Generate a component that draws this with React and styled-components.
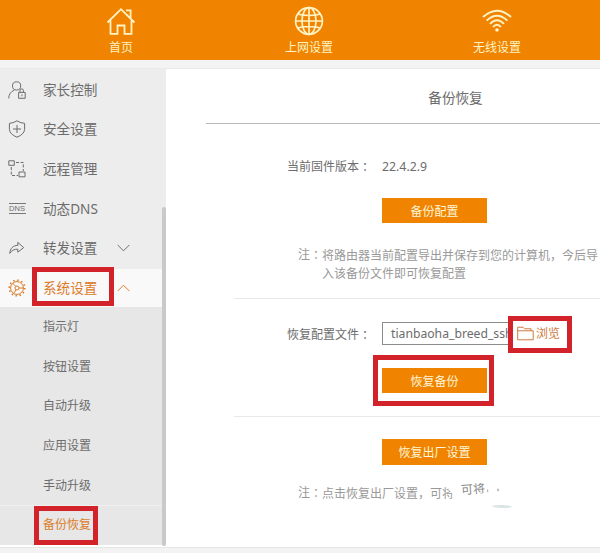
import React, { useState } from "react";
import styled, { createGlobalStyle, css } from "styled-components";

const HomeIcon = () => (
  <svg width="30" height="28" viewBox="0 0 30 28">
    <path
      d="M1.5 15.5 15 2.2 28.5 15.5M4.5 13.5V26.8H11.5V18.5H18.5V26.8H25.5V13.5M20 3.4H24.6V11"
      fill="none"
      stroke="currentColor"
      strokeWidth="1.8"
    />
  </svg>
);

const GlobeIcon = () => (
  <svg width="30" height="30" viewBox="0 0 30 30">
    <g fill="none" stroke="currentColor" strokeWidth="1.7">
      <circle cx="15" cy="15" r="13.4" />
      <ellipse cx="15" cy="15" rx="7" ry="13.4" />
      <path d="M15 1.6V28.4M1.6 15H28.4M4 8.2Q15 10.8 26 8.2M4 21.8Q15 19.2 26 21.8" />
    </g>
  </svg>
);

const WifiIcon = () => (
  <svg width="30" height="24" viewBox="0 0 30 24">
    <g fill="none" stroke="currentColor" strokeWidth="1.9">
      <path d="M1 8Q15-4.6 29 8M4.6 11.6Q15 1.8 25.4 11.6M8 14.8Q15 7.8 22 14.8M11 18Q15 13.4 19 18" />
    </g>
    <circle cx="15" cy="21" r="1.8" fill="currentColor" />
  </svg>
);

const ParentIcon = () => (
  <svg width="18" height="18" viewBox="0 0 18 18">
    <g fill="none" stroke="currentColor">
      <circle cx="8.6" cy="4.9" r="4.1" />
      <path d="M.7 17.4C.7 13.4 3 10.4 6.2 9.2M10.6 11.4V17.3H17.2V11.4ZM12 11.2V9.4Q12 7.9 13.7 7.9T15.4 9.4V11.2M13.9 13.4V15.3" />
    </g>
  </svg>
);

const ShieldIcon = () => (
  <svg width="18" height="18" viewBox="0 0 18 18">
    <path
      d="M9 .8Q5 3.3 1.4 3.3V9.5Q1.8 14.3 9 17.2Q16.2 14.3 16.6 9.5V3.3Q13 3.3 9 .8ZM9 5V13M5 9H13"
      fill="none"
      stroke="currentColor"
    />
  </svg>
);

const RemoteIcon = () => (
  <svg width="18" height="18" viewBox="0 0 18 18">
    <g fill="none" stroke="currentColor">
      <path d="M.8.8H6.3V5.3H.8ZM11 12H17V16.8H11Z" />
      <path d="M8 2.5H15.3V11M3.3 7V15.5H10" strokeDasharray="3 1.6" />
    </g>
  </svg>
);

const DnsIcon = () => (
  <DnsBadge>
    <span>DNS</span>
  </DnsBadge>
);

const ForwardIcon = () => (
  <svg width="18" height="14" viewBox="0 0 18 14">
    <path
      d="M1.8 12.4C2 7.4 5.2 4.4 9.8 4.4V1.4L15.7 6.6 9.8 11.2V8.2C6.2 8 3.8 9.4 1.8 12.4Z"
      fill="none"
      stroke="currentColor"
      strokeLinejoin="round"
    />
  </svg>
);

const GearIcon = () => (
  <svg width="18" height="18" viewBox="0 0 18 18">
    <g fill="none" stroke="currentColor">
      <circle cx="9" cy="9" r="6.4" />
      <circle cx="9" cy="9" r="7.8" strokeDasharray="1.5 2.58" strokeWidth="1.6" />
      <circle cx="9" cy="9" r="2" />
      <path d="M7.8 7.4 4.6 4.2M11 9H15.4M8 10.8 5.8 14.4" />
    </g>
  </svg>
);

const FolderIcon = () => (
  <svg width="17" height="15" viewBox="0 0 17 15">
    <path
      d="M.7 13.8V1.2H6L7.6 2.8H14V4.8H16.2V13.8ZM.7 4.8H14"
      fill="none"
      stroke="currentColor"
    />
  </svg>
);

const Chevron = ({ up }) => (
  <svg width="13" height="8" viewBox="0 0 13 8">
    <path
      d={up ? "M.7 7 6.5 1.2 12.3 7" : "M.7 1 6.5 6.8 12.3 1"}
      fill="none"
      stroke="currentColor"
    />
  </svg>
);

const tabs = [
  { name: "首页", icon: <HomeIcon /> },
  { name: "上网设置", icon: <GlobeIcon /> },
  { name: "无线设置", icon: <WifiIcon /> },
];

const menu = [
  { name: "家长控制", icon: <ParentIcon /> },
  { name: "安全设置", icon: <ShieldIcon /> },
  { name: "远程管理", icon: <RemoteIcon /> },
  { name: "动态DNS", icon: <DnsIcon /> },
  { name: "转发设置", icon: <ForwardIcon />, expand: true },
  { name: "系统设置", icon: <GearIcon />, expand: true },
];

const subMenu = [
  "指示灯",
  "按钮设置",
  "自动升级",
  "应用设置",
  "手动升级",
  "备份恢复",
];

const App = () => {
  const [open, setOpen] = useState("系统设置");
  const [page, setPage] = useState("备份恢复");

  return (
    <Page>
      <Global />
      <Header>
        {tabs.map((tab) => (
          <HeaderTab key={tab.name}>
            <TabIcon>{tab.icon}</TabIcon>
            <TabName>{tab.name}</TabName>
          </HeaderTab>
        ))}
      </Header>

      <Body>
        <Sidebar>
          {menu.map((item) => {
            const active = open === item.name;
            return (
              <MenuItem
                key={item.name}
                $active={active}
                onClick={() => item.expand && setOpen(item.name)}
              >
                <MenuIcon>{item.icon}</MenuIcon>
                <MenuName>
                  {item.name}
                  {active && <Mark $inset="-11px -14px -8px -11px" />}
                </MenuName>
                {item.expand && <Chevron up={active} />}
              </MenuItem>
            );
          })}
          <SubMenu>
            {subMenu.map((name) => (
              <SubItem
                key={name}
                $active={page === name}
                onClick={() => setPage(name)}
              >
                <SubName>
                  {name}
                  {page === name && <Mark $inset="-11px -7px -12px -9px" />}
                </SubName>
              </SubItem>
            ))}
          </SubMenu>
        </Sidebar>
        <ScrollTrack>
          <ScrollThumb />
        </ScrollTrack>

        <Main>
          <Title>备份恢复</Title>
          <Section $height={174}>
            <Row $top={32} $height={20}>
              <Label>
                当前固件版本<Colon>：</Colon>
              </Label>
              <Value>22.4.2.9</Value>
            </Row>
            <ButtonRow $top={22}>
              <Button>备份配置</Button>
            </ButtonRow>
            <Note $top={22}>
              <NoteHead>
                注<Colon>：</Colon>
              </NoteHead>
              <NoteText>
                将路由器当前配置导出并保存到您的计算机，今后导
                <br />
                入该备份文件即可恢复配置
              </NoteText>
            </Note>
          </Section>
          <Section $height={118} $line>
            <Row $top={23} $height={23}>
              <Label>
                恢复配置文件<Colon>：</Colon>
              </Label>
              <FileName>tianbaoha_breed_ssh</FileName>
              <Browse>
                <FolderIcon />
                浏览
              </Browse>
            </Row>
            <ButtonRow $top={23}>
              <Button>
                恢复备份
                <Mark $inset="-13px -7px -13px -9px" />
              </Button>
            </ButtonRow>
          </Section>
          <Section $height={130} $line>
            <ButtonRow $top={22}>
              <Button $tall>恢复出厂设置</Button>
            </ButtonRow>
            <Note $top={18}>
              <NoteHead>
                注<Colon>：</Colon>
              </NoteHead>
              <NoteText>
                点击恢复出厂设置，可<Faded>将</Faded>
                <Ghost>可将</Ghost>
                <Smudge />
              </NoteText>
            </Note>
          </Section>
        </Main>
      </Body>
    </Page>
  );
};

const Global = createGlobalStyle`
  * {
    box-sizing: border-box;
  }
  body {
    margin: 0;
    overflow: hidden;
    background: #f3f3f3;
    font-family: "Noto Sans", "Noto Sans CJK SC", sans-serif;
    color: #6c6c6c;
  }
  svg {
    display: block;
    flex-shrink: 0;
  }
`;

const Page = styled.div`
  width: 600px;
  height: 553px;
  overflow: hidden;
`;

const Header = styled.header`
  display: grid;
  grid-template-columns: repeat(3, 188px);
  height: 60px;
  padding-left: 27px;
  background: #f08400;
  color: #fff3c4;
`;
const HeaderTab = styled.div`
  display: flex;
  flex-direction: column;
  align-items: center;
  cursor: pointer;
`;
const TabIcon = styled.div`
  display: flex;
  align-items: center;
  height: 30px;
  margin-top: 6px;
`;
const TabName = styled.span`
  margin-top: 3px;
  font-size: 12px;
  line-height: 18px;
`;

const Body = styled.div`
  display: flex;
  width: 710px;
  height: 480px;
  margin-top: 8px;
  border-top: 1px solid #e9e9e9;
  border-bottom: 1px solid #e5e5e5;
  background: #fff;
`;
const Sidebar = styled.aside`
  width: 162px;
  height: 476px;
  padding-top: 1px;
  background: #ededed;
`;
const MenuItem = styled.div`
  display: flex;
  align-items: center;
  height: 39.6px;
  padding-left: 8px;
  font-size: 13.6px;
  cursor: pointer;

  ${(p) =>
    p.$active &&
    css`
      height: 38px;
      margin-top: 1px;
      color: #dc7c2a;
      background: #f9f9f9;
    `}
`;
const MenuIcon = styled.div`
  display: flex;
  justify-content: center;
  width: 18px;
`;
const MenuName = styled.span`
  position: relative;
  width: 57px;
  margin: 0 17px 0 17px;
  line-height: 20px;
  white-space: nowrap;
`;
const DnsBadge = styled.div`
  display: flex;
  align-items: center;
  justify-content: center;
  width: 17px;
  height: 11px;
  border-top: 1px solid #777;
  border-bottom: 1px solid #777;

  span {
    font: 7.5px/9px "Liberation Sans", sans-serif;
  }
`;
const SubMenu = styled.div`
  height: 238px;
  background: #e7e7e7;
`;
const SubItem = styled.div`
  display: flex;
  align-items: center;
  height: 39.6px;
  padding-left: 43px;
  border-top: 1px solid transparent;
  font-size: 12px;
  cursor: pointer;

  ${(p) =>
    p.$active &&
    css`
      color: #dc7c2a;
      border-top-color: #f0f0f0;
    `}
`;
const SubName = styled.span`
  position: relative;
  line-height: 16px;
`;

/* red frame drawn over the thing to click */
const Mark = styled.i`
  position: absolute;
  inset: ${(p) => p.$inset};
  border: 5px solid #d2232a;
  pointer-events: none;
`;

const ScrollTrack = styled.div`
  width: 4px;
  height: 477px;
  padding-top: 138px;
  background: #ededed;
`;
const ScrollThumb = styled.div`
  height: 339px;
  border-radius: 2px;
  background: #c9c9c9;
`;

const Main = styled.main`
  width: 539px;
  padding-left: 40px;
`;
const Title = styled.h2`
  height: 55px;
  margin: 0;
  padding-top: 19px;
  border-bottom: 1px solid #b9b9bc;
  font-size: 13.6px;
  font-weight: 400;
  line-height: 20px;
  text-align: center;
`;
const Section = styled.section`
  display: flow-root;
  height: ${(p) => p.$height}px;
  margin-left: 28px;
  border-top: ${(p) => (p.$line ? "1px solid #e8e8e8" : "none")};
`;
const Row = styled.div`
  display: flex;
  align-items: center;
  height: ${(p) => p.$height}px;
  margin-top: ${(p) => p.$top}px;
  padding-left: 53px;
  font-size: 12px;
`;
const Label = styled.span`
  width: 95px;
  white-space: nowrap;
`;
/* the TC face centres the colon in its box */
const Colon = styled.span`
  position: relative;
  top: 1px;
  font-family: "Noto Sans CJK TC", sans-serif;
`;
const Value = styled.span`
  font-size: 12.3px;
`;
const FileName = styled.div`
  width: 129px;
  height: 23px;
  padding-left: 8px;
  border: 1px solid #8c8c8c;
  border-right: none;
  font-size: 12.2px;
  line-height: 21px;
  white-space: nowrap;
`;
const Browse = styled.button`
  display: flex;
  align-items: center;
  gap: 2px;
  width: 64px;
  height: 37px;
  margin: 1px 0 0 -3px;
  padding: 0 0 2px 4px;
  border: 5px solid #d2232a;
  background: #fff;
  color: #cd7a40;
  font: inherit;
  white-space: nowrap;
  z-index: 1;
`;
const ButtonRow = styled.div`
  display: flex;
  margin-top: ${(p) => p.$top}px;
  padding-left: 148px;
`;
const Button = styled.button`
  position: relative;
  width: 105px;
  height: ${(p) => (p.$tall ? 26 : 25)}px;
  padding: 0;
  border: none;
  background: #f08400;
  color: #fff6d8;
  font: inherit;
  font-size: 12px;
  cursor: pointer;
`;
const Note = styled.div`
  display: flex;
  margin-top: ${(p) => p.$top}px;
  padding-left: 64px;
  color: #999;
  font-size: 12px;
  line-height: 17.5px;
`;
const NoteHead = styled.span`
  width: 24px;
  white-space: nowrap;
`;
const NoteText = styled.p`
  position: relative;
  margin: 2px 0 0;
  white-space: nowrap;
`;
const Faded = styled.span`
  display: inline-block;
  height: 17px;
  vertical-align: top;
  clip-path: polygon(0 0, 50% 20%, 100% 65%, 80% 85%, 0 100%);
`;
/* leftovers of the wiped end of the note */
const Ghost = styled.span`
  position: absolute;
  left: 139px;
  top: -5px;
  color: #888;
  clip-path: polygon(0 0, 100% 10%, 100% 70%, 0 85%);
  transform: rotate(-4deg);

  &::after {
    content: "";
    display: inline-block;
    width: 9px;
    height: 3px;
    margin-left: 2px;
    border-left: 1px solid #aaa;
    border-right: 2px solid #bbb;
  }
`;
const Smudge = styled.i`
  position: absolute;
  left: 170px;
  top: 20px;
  width: 20px;
  height: 3px;
  border-radius: 50%;
  background: #dbe4e4;
  transform: rotate(2deg);
`;

export default App;
